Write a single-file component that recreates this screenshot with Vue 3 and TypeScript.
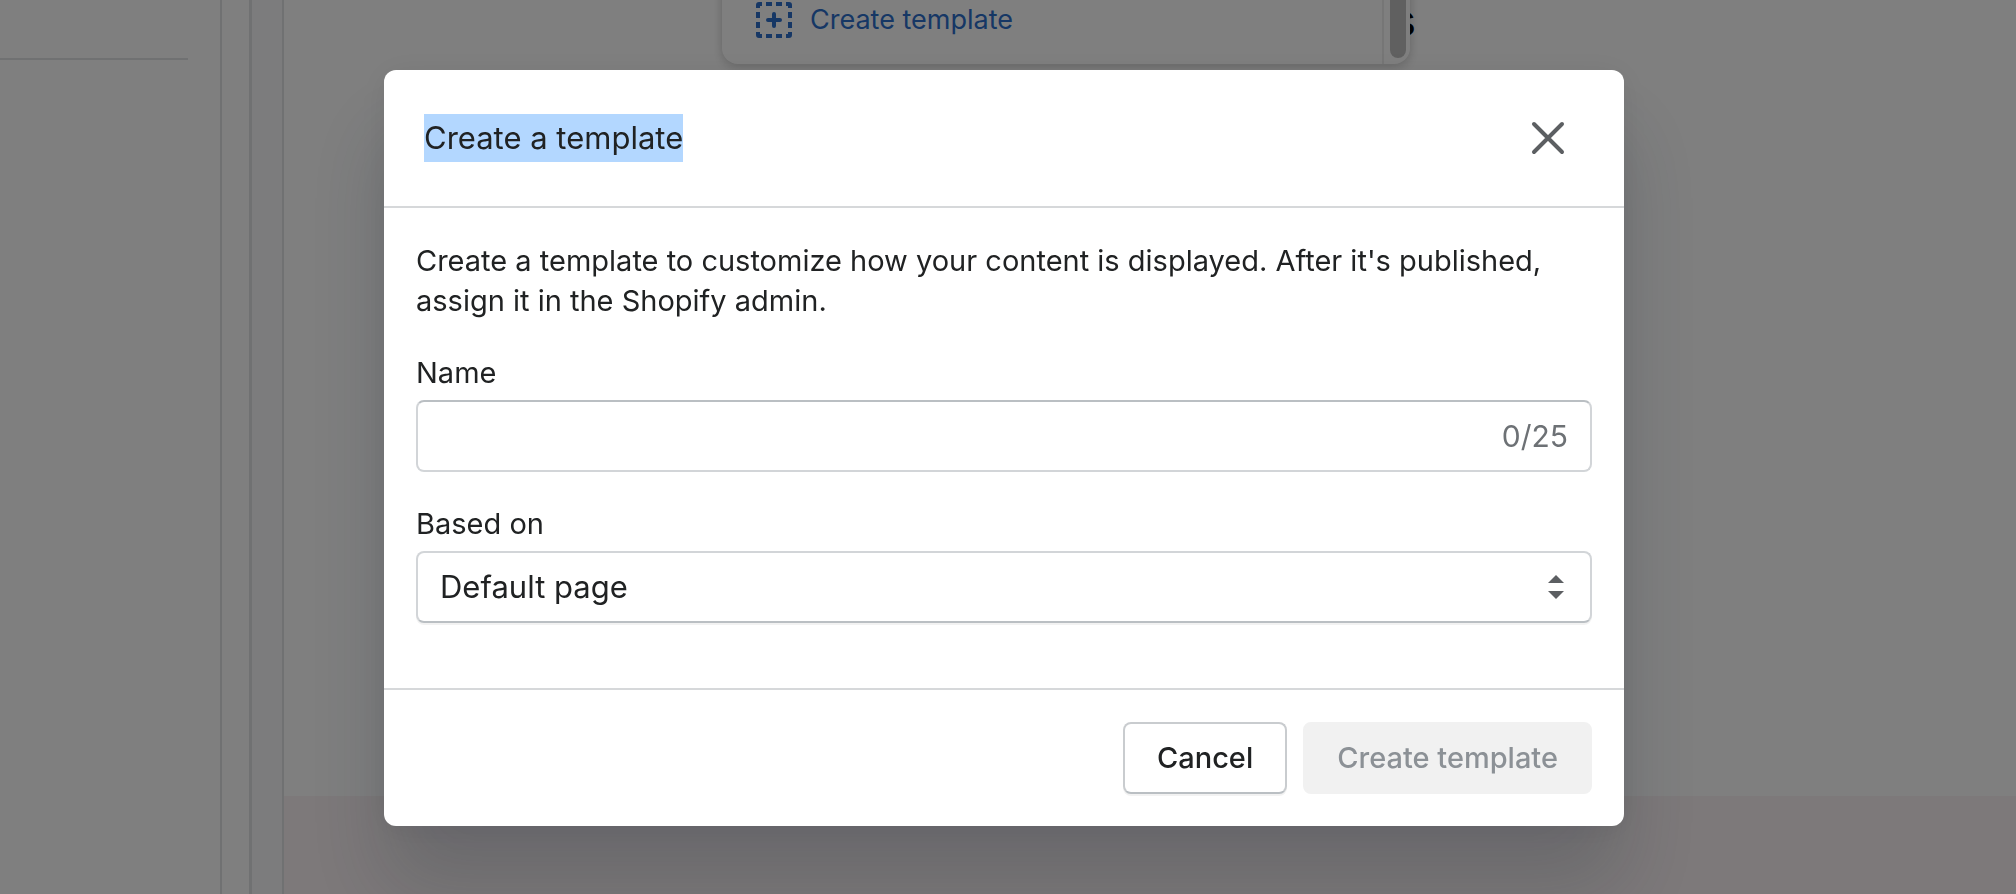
<script setup lang="ts">
import { computed, ref } from 'vue'

const maxLength = 25
const name = ref('')
const base = ref('Default page')
const counter = computed(() => `${name.value.length}/${maxLength}`)
const canCreate = computed(() => name.value.trim().length > 0)
</script>

<template>
  <div class="editor">
    <aside class="sidebar"><hr class="divider" /></aside>
    <div class="gutter"></div>
    <div class="rail"></div>
    <main class="preview">
      <section class="canvas">
        <span class="heading">s</span>
        <div class="popover">
          <div class="options">
            <button type="button" class="option">
              <svg width="36" height="36" viewBox="0 0 36 36" fill="currentColor" aria-hidden="true">
                <path d="M3 0h3v4H4v2H0V3a3 3 0 0 1 3-3ZM10 0h6v4h-6ZM20 0h6v4h-6ZM30 0h3a3 3 0 0 1 3 3v3h-4V4h-2ZM0 10h4v6H0ZM0 20h4v6H0ZM32 10h4v6h-4ZM32 20h4v6h-4ZM0 30h4v2h2v4H3a3 3 0 0 1-3-3ZM10 32h6v4h-6ZM20 32h6v4h-6ZM32 30h4v3a3 3 0 0 1-3 3h-3v-4h2Z" />
                <path d="M18 12v12M12 18h12" stroke="currentColor" stroke-width="4" stroke-linecap="round" />
              </svg>
              <span>Create template</span>
            </button>
          </div>
          <div class="track"><div class="thumb"></div></div>
        </div>
      </section>
      <section class="below"></section>
    </main>
  </div>

  <div class="overlay">
    <form class="modal" role="dialog" aria-labelledby="modal-title" @submit.prevent>
      <header class="modal-header">
        <h2 id="modal-title" class="title"><mark>Create a template</mark></h2>
        <button type="button" class="close" aria-label="Close">
          <svg width="40" height="40" viewBox="0 0 40 40" fill="none" stroke="currentColor" stroke-width="4" stroke-linecap="round" aria-hidden="true">
            <path d="M6 6l28 28M34 6L6 34" />
          </svg>
        </button>
      </header>

      <div class="modal-body">
        <p class="intro">
          Create a template to customize how your content is displayed. After it's published, assign it in the Shopify admin.
        </p>
        <div class="field">
          <label for="template-name">Name</label>
          <div class="control text-control">
            <input id="template-name" v-model="name" type="text" :maxlength="maxLength" autocomplete="off" />
            <span class="counter">{{ counter }}</span>
          </div>
        </div>
        <div class="field">
          <label for="template-base">Based on</label>
          <div class="control select-control">
            <select id="template-base" v-model="base">
              <option>Default page</option>
            </select>
            <svg class="arrows" width="16" height="24" viewBox="0 0 16 24" fill="currentColor" aria-hidden="true">
              <path d="M0 8L8 0l8 8ZM0 16h16l-8 8Z" />
            </svg>
          </div>
        </div>
      </div>

      <footer class="modal-footer">
        <button type="button" class="btn">Cancel</button>
        <button type="submit" class="btn primary" :disabled="!canCreate">Create template</button>
      </footer>
    </form>
  </div>
</template>

<style>
body {
  margin: 0;
  overflow: hidden;
}
</style>

<style scoped>
* {
  box-sizing: border-box;
}

.editor,
.overlay {
  font-family: Inter, "Liberation Sans", sans-serif;
  font-size: 29px;
  line-height: 40px;
  color: #202223;
}

button,
input,
select {
  font: inherit;
  color: inherit;
}

.editor {
  display: flex;
  height: 100vh;
  background: #fff;
}

.sidebar {
  width: 222px;
  border-right: 2px solid #e1e3e5;
}

.divider {
  width: 188px;
  height: 2px;
  margin: 58px 0 0;
  border: 0;
  background: #e1e3e5;
}

.gutter {
  width: 30px;
  border-right: 3px solid #e1e3e5;
}

.rail {
  width: 32px;
  border-right: 2px solid #e1e3e5;
  background: #f8f8fa;
}

.preview {
  display: flex;
  flex: 1;
  flex-direction: column;
}

.canvas {
  position: relative;
  flex: 1;
  background: #fff;
}

.below {
  height: 98px;
  background: #faf3f4;
}

.heading {
  position: absolute;
  top: 0;
  right: 600px;
  font-size: 44px;
  color: #000;
}

.popover {
  position: absolute;
  top: -80px;
  left: 438px;
  display: flex;
  width: 688px;
  height: 144px;
  border-radius: 16px;
  background: #fff;
  box-shadow: 0 6px 12px rgba(23, 24, 24, 0.1), 0 0 10px rgba(0, 0, 0, 0.12);
}

.options {
  display: flex;
  flex: 1;
  align-items: flex-end;
  padding: 24px 34px;
}

.option {
  display: flex;
  align-items: center;
  gap: 18px;
  padding: 0;
  border: 0;
  background: none;
  color: #2c6ecb;
  font-size: 27px;
}

.track {
  display: flex;
  width: 28px;
  padding: 0 4px 6px 6px;
  border-left: 2px solid #ececec;
}

.thumb {
  flex: 1;
  border-radius: 8px;
  background: #c1c1c1;
}

.overlay {
  position: fixed;
  inset: 0;
  display: flex;
  align-items: flex-start;
  justify-content: center;
  padding: 70px 8px 0 0;
  background: rgba(0, 0, 0, 0.5);
}

.modal {
  width: 1240px;
  max-width: 100%;
  border-radius: 12px;
  background: #fff;
  box-shadow: 0 62px 82px rgba(32, 42, 53, 0.2), 0 4px 32px rgba(32, 42, 54, 0.08);
}

.modal-header {
  display: flex;
  align-items: center;
  justify-content: space-between;
  padding: 32px 40px;
  border-bottom: 2px solid #d6d8da;
}

.title {
  margin: 0;
  font-size: 31px;
  font-weight: 400;
  line-height: 48px;
}

.title mark {
  display: block;
  background: #b3d7ff;
  color: inherit;
}

.close {
  display: flex;
  padding: 16px;
  border: 0;
  background: none;
  color: #5c5f62;
}

.modal-body {
  display: flex;
  flex-direction: column;
  gap: 32px;
  padding: 33px 32px 65px;
}

.intro {
  margin: 0;
}

.field {
  display: flex;
  flex-direction: column;
  gap: 7px;
}

.control {
  display: flex;
  align-items: center;
  height: 72px;
  border: 2px solid #d2d5d8;
  border-radius: 8px;
  background: #fff;
  font-size: 30px;
}

.text-control {
  border-top-color: #babfc3;
  padding-right: 22px;
}

.text-control input {
  flex: 1;
  min-width: 0;
  height: 100%;
  padding: 0 22px;
  border: 0;
  outline: 0;
  background: none;
}

.counter {
  color: #6d7175;
}

.select-control {
  position: relative;
  border-bottom-color: #babfc3;
  box-shadow: 0 2px 0 rgba(0, 0, 0, 0.05);
  font-size: 31px;
}

.select-control select {
  width: 100%;
  height: 100%;
  padding: 0 64px 0 22px;
  border: 0;
  outline: 0;
  appearance: none;
  background: none;
}

.arrows {
  position: absolute;
  right: 26px;
  color: #5c5f62;
  pointer-events: none;
}

.modal-footer {
  display: flex;
  justify-content: flex-end;
  gap: 16px;
  padding: 32px;
  border-top: 2px solid #d6d8da;
}

.btn {
  height: 72px;
  padding: 0 32px;
  border: 2px solid #c9cccf;
  border-bottom-color: #babfc3;
  border-radius: 8px;
  background: #fff;
  font-weight: 500;
  box-shadow: 0 2px 0 rgba(0, 0, 0, 0.05);
}

.btn.primary:disabled {
  border-color: #f1f1f1;
  background: #f1f1f1;
  color: #8c9196;
  box-shadow: none;
}
</style>
